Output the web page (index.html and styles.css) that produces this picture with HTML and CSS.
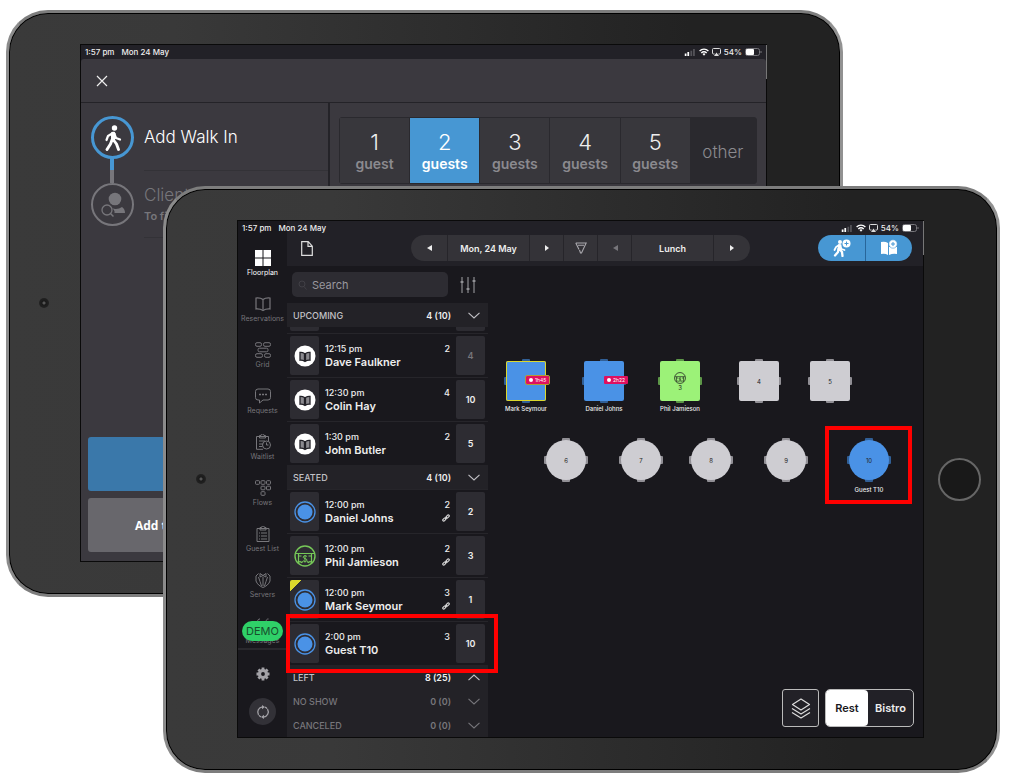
FILE: index.html
```html
<!DOCTYPE html>
<html lang="en">
<head>
  <meta charset="UTF-8">
  <meta name="viewport" content="width=device-width, initial-scale=1.0">
  <title>Add Walk In</title>
  <link rel="stylesheet" href="styles.css">
</head>
<body>
  <svg class="defs" width="0" height="0" aria-hidden="true">
    <symbol id="signal" viewBox="0 0 12 8"><path d="M0 5h2v3H0zM3 3.500h2V8H3z" fill="#fff"/><path d="M6.500 2h2v6h-2zM9.500 0h2v8h-2z" fill="#55545a"/></symbol>
    <symbol id="wifi" viewBox="0 0 10 8"><path d="M.6 2.900a6.400 6.400 0 0 1 8.800 0M2.300 4.900a4 4 0 0 1 5.400 0" fill="none" stroke="#fff" stroke-width="1.400"/><path d="M3.500 6a2.200 2.200 0 0 1 3 0L5 7.700z" fill="#fff"/></symbol>
    <symbol id="cast" viewBox="0 0 9 8"><path d="M2.500 6H1.500a1 1 0 0 1-1-1V1.500a1 1 0 0 1 1-1h6a1 1 0 0 1 1 1V5a1 1 0 0 1-1 1h-1" fill="none" stroke="#ddd"/><path d="M4.500 4.500 7 8H2z" fill="#ddd"/></symbol>
    <symbol id="battery" viewBox="0 0 17 8"><rect x=".5" y=".5" width="14" height="7" rx="2" fill="none" stroke="#77767b"/><path d="M16 3v2" stroke="#77767b"/><rect x="1" y="1" width="8" height="6" rx="1" fill="#fff"/></symbol>
    <symbol id="book" viewBox="0 0 16 14"><path d="M8 2.500v10M8 2.500C6 1 3.500.8 1 1v11c3-.2 5 .2 7 1.500 2-1.300 4-1.700 7-1.500V1c-2.500-.2-5 0-7 1.500z" fill="none" stroke="currentColor" stroke-width="1.200"/></symbol>
    <symbol id="booked" viewBox="0 0 22 22"><circle cx="11" cy="11" r="10.500" fill="#fff"/><path d="M10.500 8.500C8.800 7.400 7.500 7.200 6 7.400v7.800c1.600-.2 3 0 4.500.9zM11.500 8.500c1.700-1.100 3-1.300 4.500-1.100v7.800c-1.600-.2-3 0-4.500.9z" fill="#8b8a8f" stroke="#222127" stroke-width="1.300"/></symbol>
    <symbol id="seated" viewBox="0 0 22 22"><circle cx="11" cy="11" r="10" fill="none" stroke="#4a92e6" stroke-width="1.300"/><circle cx="11" cy="11" r="7.500" fill="#4a92e6"/></symbol>
    <symbol id="bill" viewBox="0 0 22 22"><circle cx="11" cy="11" r="10" fill="none" stroke="currentColor" stroke-width="1.400"/><path d="M2 8.500h18M4.500 9v8.500l1.500-1 1.500 1 1.500-1M17.500 9v8.500l-1.500-1-1.500 1-1.500-1M4.500 11h3M14.500 11h3" fill="none" stroke="currentColor" stroke-width="1.200"/><path d="M13 11.500c-1-1.200-4-.9-3.800.8.2 1.500 3.800 1 3.800 2.800 0 1.700-3 1.900-4 .5M11 10v7.600" fill="none" stroke="currentColor"/></symbol>
    <symbol id="link" viewBox="0 0 10 10"><g fill="none" stroke="#ddd" stroke-width="1.400"><rect x="4.600" y="2" width="4.800" height="2.400" rx="1.200" transform="rotate(-45 7 3.200)"/><rect x=".6" y="5.600" width="4.800" height="2.400" rx="1.200" transform="rotate(-45 3 6.800)"/><path d="M4 6l2-2"/></g></symbol>
    <symbol id="down" viewBox="0 0 12 7"><path d="M.5.800 6 6 11.500.800" fill="none" stroke="currentColor" stroke-width="1.100"/></symbol>
    <symbol id="up" viewBox="0 0 12 7"><path d="M.5 6.200 6 1l5.500 5.200" fill="none" stroke="currentColor" stroke-width="1.100"/></symbol>
    <symbol id="left" viewBox="0 0 6 8"><path d="M6 1v6L1 4z" fill="currentColor"/></symbol>
    <symbol id="right" viewBox="0 0 6 8"><path d="M1 1v6l4-3z" fill="currentColor"/></symbol>
    <symbol id="walk" viewBox="0 0 18 26"><circle cx="10.500" cy="3" r="2.700" fill="currentColor"/><path d="M9 8 4 11l-1.500 4M10 8l2 5 4 1.500" fill="none" stroke="currentColor" stroke-width="2.200" stroke-linecap="round" stroke-linejoin="round"/><path d="M7 7.500q3-2 4.500 1L11 16 7 15z" fill="currentColor"/><path d="M8 15l-1.500 4L3 24.500M9.500 15l3 4 2 5.500" fill="none" stroke="currentColor" stroke-width="2.900" stroke-linecap="round" stroke-linejoin="round"/></symbol>
  </svg>

  <div class="stage">
    <section class="tablet tablet-back">
      <span class="camera"></span>
      <div class="screen walkin">
        <div class="status">
          <span>1:57 pm</span><span>Mon 24 May</span>
          <span class="status-icons">
            <svg width="12" height="7"><use href="#signal"/></svg>
            <svg width="10" height="8"><use href="#wifi"/></svg>
            <svg width="9" height="8"><use href="#cast"/></svg>
            <span>54%</span>
            <svg width="17" height="8"><use href="#battery"/></svg>
          </span>
        </div>
        <header class="walkin-head">
          <button class="close" aria-label="Close"><svg width="12" height="12" viewBox="0 0 12 12"><path d="M1 1l10 10M11 1 1 11" stroke="#eee" stroke-width="1.200"/></svg></button>
        </header>
        <div class="walkin-body">
          <div class="steps">
            <div class="step active">
              <span class="step-dot"><svg width="18" height="26"><use href="#walk"/></svg></span>
              <div class="step-text"><h2>Add Walk In</h2></div>
            </div>
            <div class="step">
              <span class="step-dot"><svg width="26" height="26" viewBox="0 0 26 26"><circle cx="15" cy="7" r="6.300" fill="currentColor"/><path d="M12 16c3 1.600 7 1 10-1 2.300 1.500 3 3.500 3 6H14.500c.5-2-1-4-2.500-5z" fill="currentColor"/><circle cx="7" cy="18" r="5" fill="none" stroke="currentColor" stroke-width="1.300"/><path d="m10.500 21.500 3 3" stroke="currentColor" stroke-width="1.500"/></svg></span>
              <div class="step-text"><h2>Client Search</h2><p>To find a client</p></div>
            </div>
            <div class="step-actions">
              <button class="seat" aria-label="Seat now"></button>
              <button class="wait">Add to Waitlist</button>
            </div>
          </div>
          <div class="party">
            <div class="party-sizes">
              <button><b>1</b>guest</button>
              <button class="active"><b>2</b>guests</button>
              <button><b>3</b>guests</button>
              <button><b>4</b>guests</button>
              <button><b>5</b>guests</button>
              <button class="other">other</button>
            </div>
          </div>
        </div>
      </div>
      <span class="home"></span>
    </section>

    <section class="tablet tablet-front">
      <span class="camera"></span>
      <div class="screen floorplan">
        <div class="status">
          <span>1:57 pm</span><span>Mon 24 May</span>
          <span class="status-icons">
            <svg width="12" height="7"><use href="#signal"/></svg>
            <svg width="10" height="8"><use href="#wifi"/></svg>
            <svg width="9" height="8"><use href="#cast"/></svg>
            <span>54%</span>
            <svg width="17" height="8"><use href="#battery"/></svg>
          </span>
        </div>

        <div class="rail">
          <nav>
            <a href="#" class="active"><svg width="16" height="16" viewBox="0 0 16 16"><path d="M0 0h7.500v7.500H0zM8.500 0H16v7.500H8.500zM0 8.500h7.500V16H0zM8.500 8.500H16V16H8.500z" fill="currentColor"/></svg>Floorplan</a>
            <a href="#"><svg width="16" height="16"><use href="#book"/></svg>Reservations</a>
            <a href="#"><svg width="16" height="16" viewBox="0 0 16 16"><g fill="none" stroke="currentColor"><rect x=".5" y=".7" width="6" height="3.600" rx="1.500"/><rect x="8.500" y=".7" width="7" height="3.600" rx="1.500"/><rect x="3" y="6.200" width="10" height="3.600" rx="1.500"/><rect x=".5" y="11.700" width="7" height="3.600" rx="1.500"/><rect x="9.500" y="11.700" width="6" height="3.600" rx="1.500"/></g></svg>Grid</a>
            <a href="#"><svg width="16" height="16" viewBox="0 0 16 16"><path d="M3 1h10a2.500 2.500 0 0 1 2.500 2.500v6A2.500 2.500 0 0 1 13 12H8l-3.500 3v-3H3A2.500 2.500 0 0 1 .5 9.500v-6A2.500 2.500 0 0 1 3 1z" fill="none" stroke="currentColor"/><path d="M4 6.500h2M7 6.500h2M10 6.500h2" stroke="currentColor" stroke-width="1.400"/></svg>Requests</a>
            <a href="#"><svg width="16" height="16" viewBox="0 0 16 16"><path d="M8 15.300H1.500V2.500h12V7M4.500 4V1.500h1.500a1.500 1.500 0 0 1 3 0h1.500V4zM4 7h6M4 10h4M4 12.500h3.500" fill="none" stroke="currentColor"/><circle cx="11.500" cy="11" r="4" fill="none" stroke="currentColor"/><path d="M11.500 8.500V11h2" fill="none" stroke="currentColor"/></svg>Waitlist</a>
            <a href="#"><svg width="16" height="16" viewBox="0 0 16 16"><g fill="none" stroke="currentColor"><rect x=".5" y=".7" width="4" height="3.600" rx=".8"/><rect x="6" y=".7" width="4" height="3.600" rx=".8"/><rect x="11.500" y=".7" width="4" height="3.600" rx=".8"/><rect x="6" y="6.200" width="4" height="3.600" rx=".8"/><rect x="11.500" y="6.200" width="4" height="3.600" rx=".8"/><rect x="6" y="11.700" width="4" height="3.600" rx=".8"/></g></svg>Flows</a>
            <a href="#"><svg width="16" height="16" viewBox="0 0 16 16"><path d="M2 2.500h12v13H2zM5 4V1.500h1.500a1.500 1.500 0 0 1 3 0H11V4zM6 7h6M6 10h6M6 13h6M4 7h1M4 10h1M4 13h1" fill="none" stroke="currentColor"/></svg>Guest List</a>
            <a href="#"><svg width="16" height="16" viewBox="0 0 16 16"><path d="M3.500 1.500 1 4v5c1 3 4 5.500 7 6.500 3-1 6-3.500 7-6.500V4l-2.500-2.500M3.500 5 5 9.500l1.500 4.500M12.500 5 11 9.500 9.500 14M5 1.500v3.500L8 3.500 11 5V1.500L8 3.500zM8 5v9" fill="none" stroke="currentColor"/></svg>Servers</a>
            <a href="#"><svg width="16" height="16" viewBox="0 0 16 16"><path d="M6 4.500a2 2 0 1 1-1-3.500M14.500 4.500a2 2 0 1 1-1-3.500M1 15V8h14v7" fill="none" stroke="currentColor"/></svg>Messages</a>
          </nav>
          <span class="demo">DEMO</span>
          <div class="rail-foot">
            <button aria-label="Settings"><svg width="14" height="14" viewBox="0 0 14 14"><path d="M7 .5v13M.5 7h13M2.400 2.400l9.200 9.200M11.600 2.400l-9.200 9.200" stroke="#a3a2a7" stroke-width="2.800"/><circle cx="7" cy="7" r="3.500" fill="#19181d" stroke="#a3a2a7" stroke-width="3.200"/></svg></button>
            <button class="sync" aria-label="Sync"><svg width="14" height="14" viewBox="0 0 14 14"><path d="M2.500 9.800A5.300 5.300 0 0 1 6.500 1.800M11.500 4.200a5.300 5.300 0 0 1-4 8M9 2.200q1.500.6 2 1.600M5 11.800q-1.500-.6-2-1.600" fill="none" stroke="#a3a2a7" stroke-width="1.300"/><path d="M6 0l3 2-3 2.200zM8 14l-3-2 3-2.200z" fill="#a3a2a7"/></svg></button>
          </div>
        </div>

        <header class="toolbar">
          <button class="note" aria-label="Notes"><svg width="12" height="15" viewBox="0 0 12 15"><path d="M.700.700h6.500l4.100 4.500v9.100H.7zM7 .7v4.700h4.300" fill="none" stroke="#ddd" stroke-width="1.200"/></svg></button>
          <div class="picker">
            <button aria-label="Previous day"><svg width="6" height="8"><use href="#left"/></svg></button>
            <button class="wide">Mon, 24 May</button>
            <button aria-label="Next day"><svg width="6" height="8"><use href="#right"/></svg></button>
            <button aria-label="Filter"><svg width="12" height="12" viewBox="0 0 12 12"><path d="M.8 1h10.400L6.500 11h-1L4.500 8M.8 1 4 7.500M3 3.200h6" fill="none" stroke="#aaa9ae" stroke-width="1.100"/></svg></button>
            <button class="dim" aria-label="Previous shift"><svg width="6" height="8"><use href="#left"/></svg></button>
            <button class="wide">Lunch</button>
            <button aria-label="Next shift"><svg width="6" height="8"><use href="#right"/></svg></button>
          </div>
          <div class="adders">
            <button aria-label="Add walk in"><svg width="18" height="18" viewBox="0 0 18 18"><circle cx="7" cy="3" r="2" fill="#fff"/><path d="M6 6 3 8 1.500 11M7 6l1.500 4 3 1" fill="none" stroke="#fff" stroke-width="1.800" stroke-linecap="round"/><path d="M5 5.500h3.500L8 11H4.500z" fill="#fff"/><path d="M5.500 10 5 13l-3 3.500M7 10.500l2 2.500.5 4" fill="none" stroke="#fff" stroke-width="2.300" stroke-linecap="round"/><circle cx="13.500" cy="4.500" r="4" fill="#fff"/><path d="M13.500 2.500v4M11.500 4.500h4" stroke="#4797d3"/></svg></button>
            <button aria-label="Add reservation"><svg width="18" height="18" viewBox="0 0 18 18"><path d="M1 3q4-1 7 1v12q-3-2-7-1zM9 8h8v7q-4-1-8 1z" fill="#fff"/><circle cx="13" cy="5" r="4.200" fill="#fff" stroke="#4797d3" stroke-width=".6"/><path d="M13 3v4M11 5h4" stroke="#4797d3"/></svg></button>
          </div>
        </header>

        <aside class="guests">
          <div class="search">
            <label><svg width="9" height="10" viewBox="0 0 9 10"><circle cx="4" cy="4" r="3" fill="none" stroke="#414046"/><path d="m6 6.500 2.500 3" stroke="#414046"/></svg><input type="text" placeholder="Search" aria-label="Search"></label>
            <button aria-label="Filters"><svg width="16" height="16" viewBox="0 0 16 16"><path d="M2 0v16M8 0v16M14 0v16" stroke="#a3a2a7"/><path d="M.5 5h3M6.500 12h3M12.500 4h3" stroke="#a3a2a7" stroke-width="1.500"/></svg></button>
          </div>
          <h3><span>UPCOMING</span><b>4 (10)</b><svg width="12" height="7"><use href="#down"/></svg></h3>
          <div class="cut"><i></i><i></i></div>
          <ul>
            <li><span class="tile"><svg width="22" height="22"><use href="#booked"/></svg></span><p>12:15 pm<strong>Dave Faulkner</strong></p><span class="pax">2</span><span class="tile dim">4</span></li>
            <li><span class="tile"><svg width="22" height="22"><use href="#booked"/></svg></span><p>12:30 pm<strong>Colin Hay</strong></p><span class="pax">4</span><span class="tile">10</span></li>
            <li><span class="tile"><svg width="22" height="22"><use href="#booked"/></svg></span><p>1:30 pm<strong>John Butler</strong></p><span class="pax">2</span><span class="tile">5</span></li>
          </ul>
          <h3><span>SEATED</span><b>4 (10)</b><svg width="12" height="7"><use href="#down"/></svg></h3>
          <ul>
            <li><span class="tile"><svg width="22" height="22"><use href="#seated"/></svg></span><p>12:00 pm<strong>Daniel Johns</strong></p><span class="pax">2<svg width="8" height="8"><use href="#link"/></svg></span><span class="tile">2</span></li>
            <li><span class="tile green"><svg width="22" height="22"><use href="#bill"/></svg></span><p>12:00 pm<strong>Phil Jamieson</strong></p><span class="pax">2<svg width="8" height="8"><use href="#link"/></svg></span><span class="tile">3</span></li>
            <li><span class="tile flag"><svg width="22" height="22"><use href="#seated"/></svg></span><p>12:00 pm<strong>Mark Seymour</strong></p><span class="pax">3<svg width="8" height="8"><use href="#link"/></svg></span><span class="tile">1</span></li>
            <li class="marked"><span class="tile"><svg width="22" height="22"><use href="#seated"/></svg></span><p>2:00 pm<strong>Guest T10</strong></p><span class="pax">3</span><span class="tile">10</span></li>
          </ul>
          <h3><span>LEFT</span><b>8 (25)</b><svg width="12" height="7"><use href="#up"/></svg></h3>
          <h3 class="empty"><span>NO SHOW</span><b>0 (0)</b><svg width="12" height="7"><use href="#down"/></svg></h3>
          <h3 class="empty"><span>CANCELED</span><b>0 (0)</b><svg width="12" height="7"><use href="#down"/></svg></h3>
        </aside>

        <main class="room">
          <div class="table t1 blue late"><span class="timer">1h45</span><em>Mark Seymour</em></div>
          <div class="table t2 blue"><span class="timer">2h22</span><em>Daniel Johns</em></div>
          <div class="table t3 lime"><svg width="12" height="12"><use href="#bill"/></svg>3<em>Phil Jamieson</em></div>
          <div class="table t4">4</div>
          <div class="table t5">5</div>
          <div class="table round t6">6</div>
          <div class="table round t7">7</div>
          <div class="table round t8">8</div>
          <div class="table round t9">9</div>
          <div class="table round t10 blue">10<em>Guest T10</em></div>
          <div class="highlight"></div>
          <div class="areas">
            <button class="layers" aria-label="Layers"><svg width="20" height="21" viewBox="0 0 20 21"><path d="M10 1 18.500 6.500 10 12 1.500 6.500zM1 10.500l9 5.500 9-5.500M1 14.500l9 5.500 9-5.500" fill="none" stroke="#ddd" stroke-width="1.200" stroke-linejoin="round"/></svg></button>
            <div class="switch"><button class="active">Rest</button><button>Bistro</button></div>
          </div>
        </main>
      </div>
      <span class="home"></span>
    </section>
  </div>
</body>
</html>
```

FILE: styles.css
```css
* { box-sizing: border-box; }
body {
  margin: 0;
  background: #fff;
  color: #eee;
  font-family: Inter, "Liberation Sans", sans-serif;
}
h2, h3, p, ul { margin: 0; padding: 0; }
ul { list-style: none; }
svg { display: block; flex: none; }
.defs { position: absolute; }
button {
  display: flex;
  align-items: center;
  justify-content: center;
  margin: 0;
  padding: 0;
  border: 0;
  background: none;
  color: inherit;
  font: inherit;
  cursor: pointer;
}

/* two tablets share one grid cell, margins stagger them */
.stage {
  display: grid;
  min-width: 940px;
  padding: 10px 12px 11px 6px;
}
.tablet {
  grid-area: 1 / 1;
  display: grid;
  grid-template-columns: 72px 1fr 74px;
  align-items: center;
  justify-items: center;
  padding: 32px 0 33px;
  border: 3px solid #8b8b8b;
  border-color: #7d7d7d #929292 #7d7d7d #8b8b8b;
  border-radius: 42px;
  background: linear-gradient(90deg, #3a3a3a, #393939 20%, #222 82%);
  box-shadow: inset 0 0 0 1px #000;
}
.tablet-back { margin: 0 157px 176px 0; }
.tablet-front { margin: 176px 0 0 157px; z-index: 1; }
.camera {
  width: 10px;
  height: 10px;
  margin-right: 3px;
  border-radius: 50%;
  background: radial-gradient(#555 0 1px, #1a1a1a 2px, #222 5px);
}
.home {
  width: 43px;
  height: 43px;
  margin-right: 2px;
  border: 2px solid #666;
  border-radius: 50%;
  background: #191919;
}
.screen {
  position: relative;
  align-self: stretch;
  justify-self: stretch;
  box-shadow: 0 0 0 1px #0a0a0a;
}
.screen::after {
  content: "";
  position: absolute;
  top: 0;
  right: -1px;
  width: 1px;
  height: 34px;
  background: #777;
}

.status {
  display: flex;
  gap: 7px;
  height: 14px;
  padding: 0 4px;
  font-size: 8px;
  font-weight: 500;
  line-height: 14px;
}
.status-icons {
  display: flex;
  align-items: center;
  gap: 3px;
  margin-left: auto;
}

/* back tablet */
.walkin {
  display: flex;
  flex-direction: column;
  background: #222127;
}
.walkin-head {
  display: flex;
  align-items: center;
  height: 44px;
  padding-left: 15px;
  border-bottom: 1px solid #242328;
  border-radius: 3px 3px 0 0;
  background: #3b393f;
}
.walkin-body {
  flex: 1;
  display: grid;
  grid-template-columns: 249px 1fr;
  background: #3b393f;
}
.steps {
  display: flex;
  flex-direction: column;
  padding-top: 1px;
  border-right: 2px solid #242328;
}
.step {
  display: flex;
  gap: 10px;
  height: 67px;
  padding-left: 10px;
  color: #77767b;
}
.step-dot {
  position: relative;
  display: flex;
  align-items: center;
  justify-content: center;
  align-self: center;
  width: 43px;
  height: 43px;
  border: 2px solid #77767b;
  border-radius: 50%;
}
.step.active { color: #fff; }
.step.active .step-dot { border: 3px solid #4797d3; }
.step.active .step-dot::after {
  content: "";
  position: absolute;
  top: 39px;
  left: 16px;
  width: 4px;
  height: 25px;
  background: linear-gradient(#4797d3 50%, #77767b 50%);
}
.step-text {
  flex: 1;
  display: flex;
  flex-direction: column;
  justify-content: center;
  border-bottom: 1px solid #333237;
}
.step h2 {
  font-size: 17px;
  font-weight: 300;
  line-height: 24px;
}
.step p {
  font-size: 11px;
  font-weight: 600;
  line-height: 18px;
}
.step-actions {
  display: grid;
  gap: 7px;
  margin-top: auto;
  padding: 0 7px 9px;
}
.step-actions button { height: 54px; border-radius: 3px; }
.seat { background: #3a78aa; }
.wait {
  justify-content: flex-start;
  padding-left: 47px;
  background: #68676c;
  color: #fff;
  font: bold 12px "Open Sans", sans-serif;
}
.party { padding: 14px 9px 0; }
.party-sizes {
  display: grid;
  grid-template-columns: repeat(5, 71fr) 66fr;
  height: 67px;
  border: 1px solid #2a292e;
  border-radius: 3px;
  background: #2a292e;
}
.party-sizes button {
  flex-direction: column;
  padding-top: 2px;
  border-right: 1px solid #2a292e;
  background: #38373c;
  color: #8b8a8f;
  font-size: 14px;
  font-weight: 600;
  line-height: 20px;
}
.party-sizes b {
  color: #eee;
  font-size: 22px;
  font-weight: 300;
  line-height: 24px;
}
.party-sizes .active,
.party-sizes .active b { background: #4797d3; color: #fff; }
.party-sizes .other {
  background: #2a292e;
  font-size: 17px;
  font-weight: 300;
}

/* front tablet */
.floorplan {
  display: grid;
  grid-template-columns: 49px 201px 1fr;
  grid-template-rows: 45px auto;
  background: #19181d;
}
.floorplan .status {
  position: absolute;
  z-index: 2;
  top: 0;
  left: 0;
  right: 0;
}
.rail {
  grid-row: 1 / 3;
  position: relative;
  display: flex;
  flex-direction: column;
}
.rail nav {
  height: 427px;
  padding-top: 25px;
  overflow: hidden;
}
.rail a {
  display: flex;
  flex-direction: column;
  align-items: center;
  gap: 2px;
  height: 46px;
  padding-top: 4px;
  color: #77767b;
  font-size: 7px;
  line-height: 10px;
  text-decoration: none;
}
.rail a.active { color: #fff; }
.demo {
  position: absolute;
  top: 400px;
  left: 4px;
  width: 41px;
  border-radius: 10px;
  background: #2fd068;
  color: #174f2d;
  font-size: 11px;
  line-height: 20px;
  text-align: center;
}
.rail-foot {
  flex: 1;
  display: flex;
  flex-direction: column;
  align-items: center;
  gap: 17px;
  padding-top: 17px;
  border-top: 2px solid #29282d;
}
.rail-foot .sync {
  width: 27px;
  height: 27px;
  border-radius: 50%;
  background: #323137;
}
.toolbar {
  grid-column: 2 / 4;
  display: flex;
  align-items: center;
  padding: 9px 11px 0 14px;
  background: #222127;
}
.picker {
  display: flex;
  margin-left: 98px;
  border-radius: 13px;
  background: #343338;
  overflow: hidden;
}
.picker button {
  width: 34px;
  height: 26px;
  border-right: 1px solid #26252a;
  font-size: 9px;
  font-weight: 600;
}
.picker button:first-child { width: 37px; }
.picker button:last-child { width: 36px; border: 0; }
.picker .wide { width: 82px; }
.picker .dim { color: #77767b; }
.adders {
  display: flex;
  margin-left: auto;
  border-radius: 13px;
  background: #4797d3;
}
.adders button { width: 47px; height: 26px; }
.adders button + button { border-left: 1px solid #28669a; }

.search {
  display: flex;
  align-items: center;
  gap: 12px;
  height: 37px;
  padding-left: 5px;
}
.search label {
  display: flex;
  align-items: center;
  gap: 5px;
  width: 156px;
  height: 25px;
  padding-left: 6px;
  border-radius: 5px;
  background: #2d2c32;
}
.search input {
  width: 120px;
  padding: 0;
  border: 0;
  outline: 0;
  background: none;
  color: #eee;
  font: 11px Inter, sans-serif;
}
.search input::placeholder { color: #99989e; }
.guests h3 {
  display: grid;
  grid-template-columns: 1fr auto 12px;
  align-items: center;
  column-gap: 17px;
  height: 24px;
  padding: 0 8px 0 6px;
  background: #232227;
  color: #c2c1c6;
  font-size: 9px;
  font-weight: 500;
}
.guests h3 b { color: #eee; font-weight: 600; }
.guests h3.empty,
.guests h3.empty b { color: #77767b; }
.cut {
  display: flex;
  justify-content: space-between;
  padding: 0 3px 2px;
}
.cut i {
  width: 29px;
  height: 4px;
  border-radius: 0 0 2px 2px;
  background: #2d2c32;
}
.guests li {
  position: relative;
  display: grid;
  grid-template-columns: 29px 1fr auto 29px;
  column-gap: 6px;
  height: 44px;
  padding: 2px 3px;
  border-top: 1px solid #26252a;
}
.tile {
  display: flex;
  align-items: center;
  justify-content: center;
  border-radius: 2px;
  background: #2d2c32;
  font-size: 9px;
  font-weight: 600;
}
.tile.dim { color: #77767b; }
.tile.green { color: #76c858; }
.tile.flag { background: linear-gradient(135deg, #dcd82c 8px, #2d2c32 8px); }
.guests p,
.pax {
  padding-top: 6px;
  font-size: 9px;
  font-weight: 500;
  line-height: 14px;
}
.guests strong {
  display: block;
  font-size: 11px;
  font-weight: 600;
  line-height: 13px;
}
.pax {
  display: flex;
  flex-direction: column;
  align-items: flex-end;
  gap: 2px;
}
.marked::after,
.highlight {
  content: "";
  position: absolute;
  z-index: 3;
  border: 4px solid #f00;
}
.marked::after { inset: -8px -10px -8px -1px; }

.room {
  position: relative;
  z-index: 0;
  display: flex;
  align-items: flex-end;
  justify-content: flex-end;
  padding: 0 9px 10px;
}
.guests { z-index: 1; }
.table {
  position: absolute;
  display: flex;
  flex-direction: column;
  align-items: center;
  justify-content: center;
  width: 40px;
  height: 40px;
  border-radius: 2px;
  background: #cecdd2;
  color: #222;
  font-size: 6px;
}
/* chairs */
.table::before,
.table::after {
  content: "";
  position: absolute;
  z-index: -1;
  border-radius: 1px;
  background: #918f95;
}
.table::before { top: 16px; left: -2px; right: -2px; height: 8px; }
.table::after { left: 16px; top: -2px; bottom: -2px; width: 8px; }
.round { border-radius: 50%; }
.blue { background: #4a92e6; }
.blue::before, .blue::after { background: #315f96; }
.lime { background: #9cf278; }
.lime::before, .lime::after { background: #5d9748; }
.late { box-shadow: inset 0 0 0 1px #dcd82c; }
.t1 { left: 18px; top: 95px; }
.t2 { left: 96px; top: 95px; }
.t3 { left: 172px; top: 95px; }
.t4 { left: 251px; top: 95px; }
.t5 { left: 322px; top: 95px; }
.t6 { left: 58px; top: 174px; }
.t7 { left: 133px; top: 174px; }
.t8 { left: 203px; top: 174px; }
.t9 { left: 278px; top: 174px; }
.t10 { left: 361px; top: 174px; }
.table em {
  position: absolute;
  top: 44px;
  color: #eee;
  font-size: 6px;
  font-style: normal;
  font-weight: 500;
  line-height: 8px;
  white-space: nowrap;
}
.table.round em { top: 46px; }
.timer {
  position: absolute;
  left: 20px;
  top: 15px;
  display: flex;
  align-items: center;
  gap: 2px;
  height: 8px;
  padding: 0 3px;
  border-radius: 1px;
  background: #e0105f;
  color: #fff;
  font-size: 5px;
}
.late .timer { outline: 1px solid #b49a35; }
.timer::before {
  content: "";
  width: 4px;
  height: 4px;
  border-radius: 50%;
  background: #fff;
}
.highlight {
  left: 337px;
  top: 160px;
  width: 87px;
  height: 78px;
}
.areas {
  display: flex;
  gap: 6px;
  font-size: 11px;
  font-weight: 600;
}
.layers,
.switch {
  height: 38px;
  border: 1px solid #bbb;
  background: #222127;
}
.layers { width: 37px; border-radius: 3px; }
.switch { display: flex; width: 89px; border-radius: 5px; }
.switch button { flex: 1; }
.switch .active {
  flex: none;
  width: 42px;
  border-radius: 4px;
  background: #fff;
  color: #19181d;
}
```
